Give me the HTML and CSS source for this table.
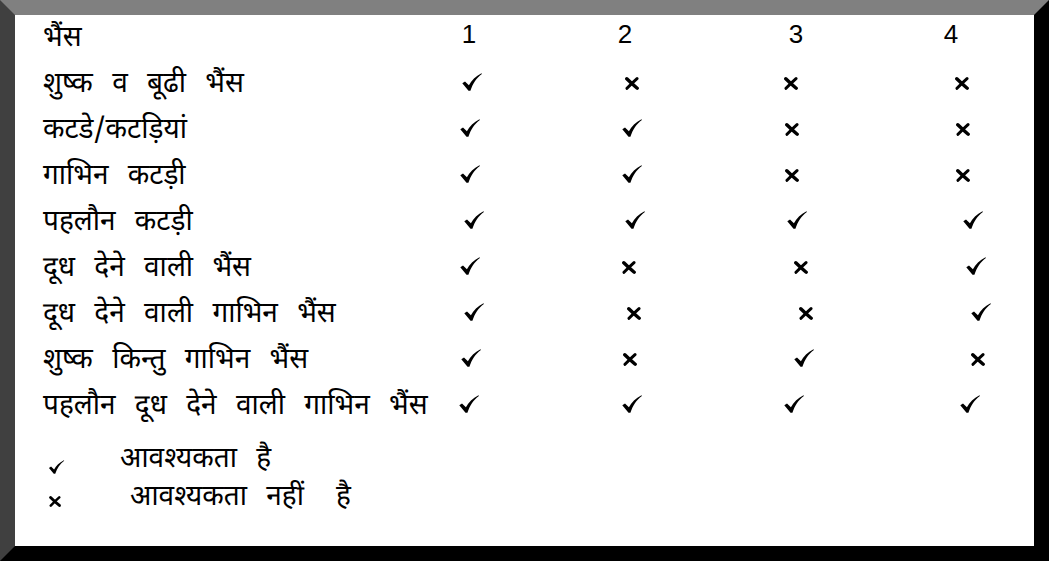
FILE: index.html
```html
<!DOCTYPE html>
<html lang="hi">
<head>
<meta charset="utf-8">
<title>भैंस</title>
<link rel="stylesheet" href="styles.css">
</head>
<body>
<svg class="defs" width="0" height="0" aria-hidden="true">
  <symbol id="ck" viewBox="0 0 20 18">
    <path d="M0.3 10.2 L3 8.4 L6.9 12.2 C9.6 7.3 13.6 3.1 19.5 0.2 L19.9 0.9 C14.6 4.7 10.9 10.2 8.4 17.8 L6.5 17.8 Z"/>
  </symbol>
  <symbol id="cx" viewBox="0 0 14 13">
    <path d="M1.8 1.8 C4.8 4.8 8.5 8.2 12.2 11.2" fill="none" stroke="currentColor" stroke-width="3.4" stroke-linecap="round"/>
    <path d="M12 1.6 C8.6 4.6 5.4 7.8 2 11.3" fill="none" stroke="currentColor" stroke-width="3" stroke-linecap="round"/>
  </symbol>
</svg>
<div class="frame">
  <div class="table">
    <div class="label">भैंस</div>
    <div class="num dx-1">1</div>
    <div class="num dx-7">2</div>
    <div class="num dx4">3</div>
    <div class="num dx-12">4</div>

    <div class="label">शुष्क व बूढी भैंस</div>
    <div class="mark dx2"><svg class="ck"><use href="#ck"/></svg></div>
    <div class="mark"><svg class="cx"><use href="#cx"/></svg></div>
    <div class="mark dx-1"><svg class="cx"><use href="#cx"/></svg></div>
    <div class="mark dx-1"><svg class="cx"><use href="#cx"/></svg></div>

    <div class="label">कटडे/कटड़ियां</div>
    <div class="mark"><svg class="ck"><use href="#ck"/></svg></div>
    <div class="mark"><svg class="ck"><use href="#ck"/></svg></div>
    <div class="mark"><svg class="cx"><use href="#cx"/></svg></div>
    <div class="mark"><svg class="cx"><use href="#cx"/></svg></div>

    <div class="label">गाभिन कटड़ी</div>
    <div class="mark"><svg class="ck"><use href="#ck"/></svg></div>
    <div class="mark"><svg class="ck"><use href="#ck"/></svg></div>
    <div class="mark"><svg class="cx"><use href="#cx"/></svg></div>
    <div class="mark"><svg class="cx"><use href="#cx"/></svg></div>

    <div class="label">पहलौन कटड़ी</div>
    <div class="mark dx4"><svg class="ck"><use href="#ck"/></svg></div>
    <div class="mark dx3"><svg class="ck"><use href="#ck"/></svg></div>
    <div class="mark dx5"><svg class="ck"><use href="#ck"/></svg></div>
    <div class="mark dx10"><svg class="ck"><use href="#ck"/></svg></div>

    <div class="label">दूध देने वाली भैंस</div>
    <div class="mark"><svg class="ck"><use href="#ck"/></svg></div>
    <div class="mark dx-3"><svg class="cx"><use href="#cx"/></svg></div>
    <div class="mark dx9"><svg class="cx"><use href="#cx"/></svg></div>
    <div class="mark dx13"><svg class="ck"><use href="#ck"/></svg></div>

    <div class="label">दूध देने वाली गाभिन भैंस</div>
    <div class="mark dx4"><svg class="ck"><use href="#ck"/></svg></div>
    <div class="mark dx2"><svg class="cx"><use href="#cx"/></svg></div>
    <div class="mark dx14"><svg class="cx"><use href="#cx"/></svg></div>
    <div class="mark dx18"><svg class="ck"><use href="#ck"/></svg></div>

    <div class="label">शुष्क किन्तु गाभिन भैंस</div>
    <div class="mark dx1"><svg class="ck"><use href="#ck"/></svg></div>
    <div class="mark dx-2"><svg class="cx"><use href="#cx"/></svg></div>
    <div class="mark dx12"><svg class="ck"><use href="#ck"/></svg></div>
    <div class="mark dx15"><svg class="cx"><use href="#cx"/></svg></div>

    <div class="label">पहलौन दूध देने वाली गाभिन भैंस</div>
    <div class="mark dx-1"><svg class="ck"><use href="#ck"/></svg></div>
    <div class="mark"><svg class="ck"><use href="#ck"/></svg></div>
    <div class="mark dx2"><svg class="ck"><use href="#ck"/></svg></div>
    <div class="mark dx7"><svg class="ck"><use href="#ck"/></svg></div>
  </div>

  <div class="legend">
    <div class="lmark"><svg class="ck small"><use href="#ck"/></svg></div>
    <div class="ltext">आवश्यकता है</div>
    <div class="lmark"><svg class="cx small"><use href="#cx"/></svg></div>
    <div class="ltext indent">आवश्यकता नहीं<span class="gap">है</span></div>
  </div>
</div>
</body>
</html>
```

FILE: styles.css
```css
* { box-sizing: border-box; }

html, body {
  margin: 0;
  padding: 0;
  background: #fff;
}

.defs {
  position: absolute;
  width: 0;
  height: 0;
  overflow: hidden;
}

.frame {
  width: 1049px;
  height: 561px;
  border-style: solid;
  border-width: 15px;
  border-color: #808080 #000 #000 #404040;
  background: #fff;
  padding: 0 0 0 28px;
  color: #000;
  font-family: "Noto Sans Devanagari", "Lohit Devanagari", "Noto Sans", "FreeSans", sans-serif;
}

.table {
  display: grid;
  grid-template-columns: 407px 162px 160px 171px 1fr;
  grid-auto-rows: 46px;
  align-items: start;
}

.label {
  font-size: 28px;
  line-height: 40px;
  padding-top: 4px;
  word-spacing: 12px;
  white-space: nowrap;
}

.num {
  width: 40px;
  text-align: center;
  font-family: "Liberation Sans", Arial, sans-serif;
  font-size: 26px;
  line-height: 38px;
}

.mark {
  width: 40px;
  display: flex;
  justify-content: center;
  align-items: center;
  height: 46px;
  padding-bottom: 4px;
  color: #000;
}

.ck {
  width: 20px;
  height: 18px;
  fill: #000;
}

.cx {
  width: 14px;
  height: 13px;
  color: #000;
  margin-top: 3px;
}

.ck.small {
  width: 17px;
  height: 14px;
  margin-top: 14px;
}

.cx.small {
  width: 14px;
  height: 11px;
  margin-top: 6px;
}

.dx-12 { margin-left: -12px; }
.dx-7 { margin-left: -7px; }
.dx-3 { margin-left: -3px; }
.dx-2 { margin-left: -2px; }
.dx-1 { margin-left: -1px; }
.dx1 { margin-left: 1px; }
.dx2 { margin-left: 2px; }
.dx3 { margin-left: 3px; }
.dx4 { margin-left: 4px; }
.dx5 { margin-left: 5px; }
.dx7 { margin-left: 7px; }
.dx9 { margin-left: 9px; }
.dx10 { margin-left: 10px; }
.dx12 { margin-left: 12px; }
.dx13 { margin-left: 13px; }
.dx14 { margin-left: 14px; }
.dx15 { margin-left: 15px; }
.dx18 { margin-left: 18px; }

.legend {
  display: grid;
  grid-template-columns: 77px 1fr;
  grid-auto-rows: 38px;
  align-items: center;
  margin-top: 12px;
}

.lmark {
  display: flex;
  align-items: center;
  padding-left: 5px;
}

.ltext {
  font-size: 28px;
  line-height: 38px;
  word-spacing: 12px;
  white-space: nowrap;
}

.ltext.indent {
  padding-left: 10px;
}

.gap {
  margin-left: 32px;
}
```
